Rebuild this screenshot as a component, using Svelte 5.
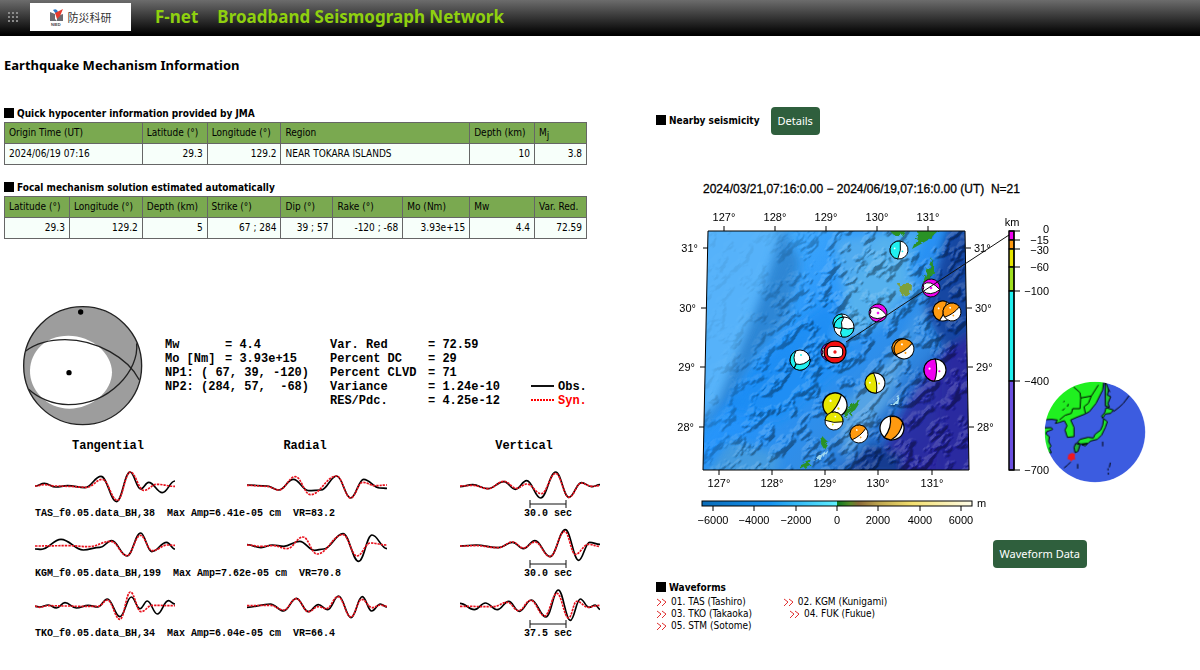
<script>
    const hypocenter = [
        { label: "Origin Time (UT)", value: "2024/06/19 07:16", width: 138, left: true },
        { label: "Latitude (°)", value: "29.3", width: 65 },
        { label: "Longitude (°)", value: "129.2", width: 74 },
        { label: "Region", value: "NEAR TOKARA ISLANDS", width: 189, left: true },
        { label: "Depth (km)", value: "10", width: 65 },
        { label: "Mj", value: "3.8", width: 52 },
    ];

    const solution = [
        { label: "Latitude (°)", value: "29.3", width: 65 },
        { label: "Longitude (°)", value: "129.2", width: 73 },
        { label: "Depth (km)", value: "5", width: 65 },
        { label: "Strike (°)", value: "67 ; 284", width: 74 },
        { label: "Dip (°)", value: "39 ; 57", width: 52 },
        { label: "Rake (°)", value: "-120 ; -68", width: 70 },
        { label: "Mo (Nm)", value: "3.93e+15", width: 67 },
        { label: "Mw", value: "4.4", width: 65 },
        { label: "Var. Red.", value: "72.59", width: 52 },
    ];

    const tables = [
        { title: "Quick hypocenter information provided by JMA", cells: hypocenter },
        { title: "Focal mechanism solution estimated automatically", cells: solution },
    ];

    const momentLines = [
        ["Mw", "= 4.4"],
        ["Mo [Nm]", "= 3.93e+15"],
        ["NP1: ( 67, 39, -120)", ""],
        ["NP2: (284, 57,  -68)", ""],
    ];

    const qualityLines = [
        ["Var. Red", "= 72.59"],
        ["Percent DC", "= 29"],
        ["Percent CLVD", "= 71"],
        ["Variance", "= 1.24e-10"],
        ["RES/Pdc.", "= 4.25e-12"],
    ];

    const components = [
        { name: "Tangential", x: 35, center: 108 },
        { name: "Radial", x: 247, center: 305 },
        { name: "Vertical", x: 460, center: 524 },
    ];

    // turning points of each trace, 3 units per pixel: [time, amplitude]
    const stations = [
        {
            y: 486,
            text: "TAS_f0.05.data_BH,38  Max Amp=6.41e-05 cm  VR=83.2",
            span: "30.0 sec",
            obs: [
                [[0,0],[28,-8],[62,3],[98,-1],[150,5],[198,-29],[245,47],[285,-42],[317,9],[341,-11],[382,20],[420,-15]],
                [[0,-3],[60,0],[95,12],[139,-20],[185,14],[222,12],[269,-30],[311,36],[350,-20],[398,6],[420,7]],
                [[0,2],[38,-4],[84,8],[132,-13],[166,10],[200,-16],[242,36],[287,-42],[327,34],[364,-10],[395,2],[420,-4]],
            ],
            syn: [
                [[0,0],[28,-4],[62,0],[98,1],[155,4],[202,-20],[247,43],[286,-42],[326,13],[366,-5],[420,1]],
                [[0,-2],[60,1],[95,12],[145,-28],[190,26],[269,-30],[311,36],[347,-11],[385,-1],[420,-3]],
                [[0,0],[38,-2],[84,8],[132,-14],[170,7],[200,-6],[244,23],[287,-38],[327,34],[364,-9],[395,1],[420,-1]],
            ],
        },
        {
            y: 546,
            text: "KGM_f0.05.data_BH,199  Max Amp=7.62e-05 cm  VR=70.8",
            span: "30.0 sec",
            obs: [
                [[0,9],[18,10],[78,-20],[145,12],[195,4],[230,-16],[276,30],[317,-39],[350,17],[395,-11],[420,9]],
                [[0,-4],[42,5],[76,-3],[110,1],[158,-14],[203,13],[230,9],[288,-37],[335,46],[375,-33],[420,8]],
                [[0,0],[48,-3],[115,5],[158,-11],[190,8],[225,-16],[270,32],[316,-49],[356,43],[389,-11],[420,-5]],
            ],
            syn: [
                [[0,0],[100,-1],[160,2],[228,-14],[276,29],[316,-32],[352,14],[398,-3],[420,-2]],
                [[0,-3],[42,1],[80,-1],[120,8],[168,-27],[210,24],[288,-34],[330,30],[370,-9],[420,-3]],
                [[0,0],[48,-1],[115,5],[158,-12],[190,6],[225,-12],[270,32],[314,-44],[346,25],[385,-5],[420,1]],
            ],
        },
        {
            y: 606,
            text: "TKO_f0.05.data_BH,34  Max Amp=6.04e-05 cm  VR=66.4",
            span: "37.5 sec",
            obs: [
                [[0,1],[14,3],[40,-3],[64,6],[90,-10],[124,6],[160,-2],[188,3],[217,-21],[255,32],[289,-27],[315,8],[337,-15],[367,24],[400,-16],[420,-6]],
                [[0,4],[70,-6],[110,15],[148,-23],[184,17],[214,-4],[242,11],[275,-30],[312,35],[346,-28],[374,15],[400,-6],[420,3]],
                [[0,-8],[43,11],[76,-9],[112,11],[146,-14],[178,16],[214,-18],[258,33],[295,-48],[331,43],[361,-21],[387,4],[406,-3],[420,10]],
            ],
            syn: [
                [[0,0],[14,4],[40,-1],[100,0],[130,1],[190,1],[217,-18],[255,40],[286,-42],[318,17],[352,-2],[420,-1]],
                [[0,-1],[70,-2],[110,12],[148,-22],[184,17],[214,2],[238,8],[273,-28],[312,33],[344,-20],[376,5],[400,-3],[420,1]],
                [[0,1],[100,2],[142,-11],[176,14],[212,-17],[254,30],[291,-38],[326,36],[350,-14],[385,4],[405,0],[420,-2]],
            ],
        },
    ];

    /**
   * @param {number[][]} points
   */
    function tracePath(points) {
        let d = `M${points[0][0]} ${points[0][1]}`;
        for (let i = 1; i < points.length; i++) {
            const [x0, y0] = points[i - 1];
            const [x1, y1] = points[i];
            const dx = (x1 - x0) * 0.4;
            d += `C${x0 + dx} ${y0} ${x1 - dx} ${y1} ${x1} ${y1}`;
        }
        return d;
    }

    const topTicks = [[724, "127°"], [775, "128°"], [826, "129°"], [877, "130°"], [928, "131°"]];
    const bottomTicks = [[719, "127°"], [772, "128°"], [825, "129°"], [878, "130°"], [932, "131°"]];
    const sideTicks = [
        { y: 248, label: "31°", left: 708, right: 966 },
        { y: 308, label: "30°", left: 706, right: 967 },
        { y: 367, label: "29°", left: 705, right: 968 },
        { y: 427, label: "28°", left: 704, right: 969 },
    ];

    // tick position, label baseline, label
    const depths = [
        [231, 233, "0"],
        [240, 244, "−15"],
        [249, 254, "−30"],
        [267, 271, "−60"],
        [291, 295, "−100"],
        [381, 385, "−400"],
        [470, 474, "−700"],
    ];
    const depthColors = [
        [231, 9, "#f000f0"],
        [240, 9, "#ff9a10"],
        [249, 18, "#e6e600"],
        [267, 24, "#a0e020"],
        [291, 90, "#20f0f0"],
        [381, 89, "#6a50e0"],
    ];
    const elevations = [[713, "−6000"], [754, "−4000"], [796, "−2000"], [837, "0"], [878, "2000"], [920, "4000"], [961, "6000"]];

    const balls = [
        { x: 899, y: 250, r: 9, color: "#20f0f0", kind: "half", turn: 8 },
        { x: 878, y: 313, r: 9, color: "#f000f0", kind: "lens", turn: 10 },
        { x: 931, y: 288, r: 9, color: "#f000f0", kind: "lens", turn: 5 },
        { x: 943, y: 311, r: 10, color: "#ff9a10", kind: "half", turn: 20 },
        { x: 952, y: 312, r: 9, color: "#ff9a10", kind: "half", turn: 55 },
        { x: 842, y: 323, r: 9, color: "#20f0f0", kind: "half", turn: 0 },
        { x: 844, y: 327, r: 10, color: "#20f0f0", kind: "quad", turn: 0 },
        { x: 901, y: 348, r: 9, color: "#ff9a10", kind: "half", turn: 30 },
        { x: 904, y: 349, r: 10, color: "#ff9a10", kind: "half", turn: 55 },
        { x: 800, y: 360, r: 10, color: "#20f0f0", kind: "bowl", turn: 0 },
        { x: 830, y: 352, r: 9, color: "#c020f0", kind: "lens", turn: 0 },
        { x: 835, y: 352, r: 11, color: "#f01010", kind: "core", turn: 0 },
        { x: 935, y: 370, r: 11, color: "#f000f0", kind: "half", turn: 2 },
        { x: 875, y: 383, r: 10, color: "#e6e600", kind: "half", turn: -8 },
        { x: 835, y: 405, r: 12, color: "#e6e600", kind: "half", turn: 32 },
        { x: 834, y: 421, r: 9, color: "#e6e600", kind: "half", turn: 95 },
        { x: 859, y: 434, r: 9, color: "#ff9a10", kind: "half", turn: 50 },
        { x: 892, y: 428, r: 12, color: "#ff9a10", kind: "band", turn: 10 },
    ];

    const waveforms = [
        ["01. TAS (Tashiro)", "02. KGM (Kunigami)"],
        ["03. TKO (Takaoka)", "04. FUK (Fukue)"],
        ["05. STM (Sotome)"],
    ];
</script>

<header>
    <svg class="grip" viewBox="0 0 12 12" aria-hidden="true">
        {#each [1, 5, 9] as gy}
            {#each [1, 5, 9] as gx}
                <rect x={gx} y={gy} width="2" height="2" fill="#8a8a8a" />
            {/each}
        {/each}
    </svg>
    <a class="logo" href="#nied">
        <svg viewBox="0 0 14 17" aria-hidden="true">
            <path d="M0 3 5 5 5 12 0 12Z M7 7 13 5 13 12 7 12Z M2 7 7 12 3 12Z" fill="#6b6b70" />
            <path d="M3 1Q7-1 8 3L6 5Z" fill="#2a78c8" />
            <path d="M5 4 13 0 10 7 7 10Z" fill="#e63b2e" />
            <text x="1" y="17">NIED</text>
        </svg>
        <span>防災科研</span>
    </a>
    <h1><span>F-net</span> <span>Broadband Seismograph Network</span></h1>
</header>

<main>
    <section class="left">
        <h2>Earthquake Mechanism Information</h2>

        {#each tables as table}
            <table>
                <caption><i class="mark"></i>{table.title}</caption>
                <colgroup>
                    {#each table.cells as cell}
                        <col style="width: {cell.width / 583 * 100}%">
                    {/each}
                </colgroup>
                <thead>
                    <tr>
                        {#each table.cells as cell}
                            <th>
                                {#if cell.label === "Mj"}M<sub>j</sub>{:else}{cell.label}{/if}
                            </th>
                        {/each}
                    </tr>
                </thead>
                <tbody>
                    <tr>
                        {#each table.cells as cell}
                            <td class:text={cell.left}>{cell.value}</td>
                        {/each}
                    </tr>
                </tbody>
            </table>
        {/each}

        <svg class="mechanism" viewBox="4 300 600 345" role="img" aria-label="Moment tensor solution">
            <!-- beach ball, drawn at 3x -->
            <g transform="translate(0 290) scale(0.3333)" fill="none" stroke="#222" stroke-width="4">
                <circle cx="248" cy="227" r="177" fill="#9d9d9d" />
                <path d="M90 240C92 185 135 137 205 137C275 137 336 190 336 247C336 305 275 356 208 356C140 356 88 300 90 240Z" fill="#fff" stroke="none" />
                <path d="M76 184C110 158 150 149 195 149C290 149 385 205 418 270" />
                <path d="M410 160C418 240 330 344 205 344C155 344 112 322 86 298" />
                <circle cx="242" cy="66" r="8" fill="#000" stroke="none" />
                <circle cx="207" cy="248" r="8" fill="#000" stroke="none" />
            </g>

            <g class="params">
                {#each momentLines as line, i}
                    <text x="165" y={348 + i * 14}>{line[0]}</text>
                    <text x="225" y={348 + i * 14}>{line[1]}</text>
                {/each}
                {#each qualityLines as line, i}
                    <text x="330" y={348 + i * 14}>{line[0]}</text>
                    <text x="428" y={348 + i * 14}>{line[1]}</text>
                {/each}
                <path d="M531 386H554" stroke="#111" stroke-width="2" />
                <text x="558" y="390">Obs.</text>
                <path d="M531 400H554" stroke="#f00" stroke-width="2" stroke-dasharray="2 1" />
                <text x="558" y="404" fill="#f00">Syn.</text>
                {#each components as component}
                    <text x={component.center} y="449" text-anchor="middle">{component.name}</text>
                {/each}
            </g>

            {#each stations as station}
                {#each components as component, c}
                    <g transform="translate({component.x} {station.y}) scale(0.3333)" fill="none">
                        <path d={tracePath(station.obs[c])} stroke="#000" stroke-width="5" />
                        <path d={tracePath(station.syn[c])} stroke="#e8101c" stroke-width="5" stroke-dasharray="7 3" />
                    </g>
                {/each}
                <g class="station">
                    <text x="35" y={station.y + 30}>{station.text}</text>
                    <path d="M530 {station.y + 18}H566M530 {station.y + 14}v8M566 {station.y + 14}v8" stroke="#111" />
                    <text x="548" y={station.y + 30} text-anchor="middle">{station.span}</text>
                </g>
            {/each}
        </svg>
    </section>

    <section class="right">
        <div class="nearby">
            <h3><i class="mark"></i>Nearby seismicity</h3>
            <button type="button">Details</button>
        </div>

        <svg class="map" viewBox="656 180 504 350" role="img" aria-label="Nearby seismicity map">
            <defs>
                <clipPath id="frame"><path d="M708 231H965L969 470H703Z" /></clipPath>
                <clipPath id="globe"><circle cx="735" cy="276" r="151" /></clipPath>
                <linearGradient id="sea" gradientUnits="userSpaceOnUse" x1="730" y1="250" x2="960" y2="460">
                    <stop offset="0" stop-color="#46aefc" />
                    <stop offset="0.4" stop-color="#1e90fa" />
                    <stop offset="0.65" stop-color="#2a88e4" />
                    <stop offset="0.85" stop-color="#1450b4" />
                    <stop offset="1" stop-color="#281e96" />
                </linearGradient>
                <linearGradient id="elevation">
                    <stop offset="0" stop-color="#0a6cb8" />
                    <stop offset="0.25" stop-color="#1592f0" />
                    <stop offset="0.5" stop-color="#5ff0ff" />
                    <stop offset="0.5" stop-color="#0a7a20" />
                    <stop offset="0.55" stop-color="#5a8a28" />
                    <stop offset="0.58" stop-color="#8a6a38" />
                    <stop offset="0.66" stop-color="#c0a850" />
                    <stop offset="0.78" stop-color="#f4e070" />
                    <stop offset="1" stop-color="#fffce8" />
                </linearGradient>
                <filter id="relief" x="0" y="0" width="1" height="1" color-interpolation-filters="sRGB">
                    <feTurbulence type="fractalNoise" baseFrequency="0.05 0.08" numOctaves="4" seed="23" />
                    <feColorMatrix values="0 0 0 0 0  0 0 0 0 0  0 0 0 0 0  2.4 0 0 0 -1.2" />
                    <feDiffuseLighting surfaceScale="6" diffuseConstant="0.76" lighting-color="#fff">
                        <feDistantLight azimuth="270" elevation="46" />
                    </feDiffuseLighting>
                </filter>
                <filter id="soft"><feGaussianBlur stdDeviation="5" /></filter>
                <filter id="rough" x="-0.2" y="-0.2" width="1.4" height="1.4">
                    <feTurbulence type="fractalNoise" baseFrequency="0.2" numOctaves="2" seed="4" />
                    <feDisplacementMap in="SourceGraphic" scale="6" />
                </filter>
                <linearGradient id="fade" gradientUnits="userSpaceOnUse" x1="735" y1="320" x2="800" y2="350">
                    <stop offset="0" stop-color="#222" />
                    <stop offset="1" stop-color="#fff" />
                </linearGradient>
                <mask id="rugged" maskUnits="userSpaceOnUse" x="700" y="230" width="270" height="242">
                    <rect x="700" y="230" width="270" height="242" fill="url(#fade)" />
                </mask>
            </defs>

            <text class="title" x="703" y="193">2024/03/21,07:16:0.00 − 2024/06/19,07:16:0.00 (UT)  N=21</text>

            <g clip-path="url(#frame)">
                <rect x="700" y="230" width="270" height="242" fill="url(#sea)" />
                <g filter="url(#soft)">
                    <path d="M700 225H782L765 280L742 345L718 400L700 420Z" fill="#55b2fa" />
                    <path d="M782 225L768 275L755 310L738 352L716 405L700 420V432L728 400L760 350L788 318L800 262Z" fill="#2a7cc8" opacity="0.75" />
                    <path d="M790 330L830 300L850 360L780 420L720 410Z" fill="#128af4" />
                    <path d="M835 240L890 232L920 290L850 340Z" fill="#48a8f0" />
                    <path d="M880 232L925 228L890 320L830 345L850 290Z" fill="#52b0ec" opacity="0.7" />
                    <path d="M948 228H975V480H935L945 350L925 310Z" fill="#0b3f9f" />
                    <path d="M840 410L900 350L925 300L890 400L845 460Z" fill="#58a6e4" opacity="0.8" />
                    <path d="M915 390L945 350L975 330V480H895L885 445Z" fill="#251d9c" opacity="0.85" />
                    <path d="M845 475L870 445L900 455L900 475Z" fill="#0d348c" />
                    <path d="M703 475L730 440L780 455L775 475Z" fill="#3d98e0" />
                </g>
                <g class="shade" mask="url(#rugged)">
                    <rect x="640" y="160" width="390" height="390" transform="rotate(-45 835 350)" filter="url(#relief)" />
                </g>
                <g filter="url(#rough)">
                    <path d="M888 229H910L905 234L895 236Z M918 229H940L928 240L912 249L916 240Z" fill="#2c9228" />
                    <path d="M932 258L934 272L928 284L923 282Z" fill="#2c9228" />
                    <path d="M898 284H911L910 294L902 296Z" fill="#7da03c" />
                    <path d="M862 399L856 401L845 410L844 418L855 410Z M822 436L828 442L824 449L821 444Z M799 466L812 460L810 465L800 470Z" fill="#2c9228" />
                    <path d="M814 462L822 454L828 449L822 459Z M890 405L900 395L898 405Z" fill="#9fd8f0" />
                </g>
            </g>
            <path d="M708 231H965L969 470H703Z" fill="none" stroke="#000" />

            {#each balls as ball}
                <g transform="translate({ball.x} {ball.y}) scale({ball.r / 10}) rotate({ball.turn})" stroke="#000">
                    {#if ball.kind === "lens"}
                        <circle r="10" fill={ball.color} />
                        <path d="M-9-3Q-2-10 10 1Q0 10-9 4Q-7 0-9-3Z" fill="#fff" />
                        <circle r="1" fill={ball.color} stroke={ball.color} />
                    {:else if ball.kind === "core"}
                        <circle r="10" fill={ball.color} />
                        <rect x="-7" y="-5" width="14" height="10" rx="4" fill="#fff" />
                        <circle r="1" fill={ball.color} stroke={ball.color} />
                    {:else if ball.kind === "quad"}
                        <circle r="10" fill="#fff" />
                        <path d="M0-10A10 10 0 0 0-10 0Q-5 2-2 1Q-4-5 0-10Z M10 1A10 10 0 0 1-2 10Q-5 6-2 1Q4 3 10 1Z" fill={ball.color} />
                    {:else if ball.kind === "bowl"}
                        <circle r="10" fill="#fff" />
                        <path d="M-4-9A10 10 0 0 0-6 8Q-4 6-4 4Q-8-2-4-9Z M10-1A10 10 0 0 1-6 8L-4 4Q4 6 10-1Z" fill={ball.color} />
                        <circle cx="1" cy="-5" r="1" fill={ball.color} stroke="none" />
                    {:else if ball.kind === "band"}
                        <circle r="10" fill="#fff" />
                        <path d="M-3-9A10 10 0 0 1 8-6Q8 4 1 10Q-3 10-5 9Q0 0-3-9Z" fill={ball.color} />
                    {:else}
                        <circle r="10" fill="#fff" />
                        <path d="M0-10A10 10 0 0 0 0 10Q3 0 0-10Z" fill={ball.color} />
                        <circle cx="4" cy="1" r="1" fill={ball.color} stroke="none" />
                        <circle cx="-5" cy="-1" r="1" fill="#fff" stroke="none" />
                    {/if}
                </g>
            {/each}
            <path d="M846 342L1009 235" stroke="#111" />

            <g class="axis">
                {#each topTicks as tick}
                    <path d="M{tick[0]} 231v-5" />
                    <text x={tick[0]} y="221" text-anchor="middle">{tick[1]}</text>
                {/each}
                {#each bottomTicks as tick}
                    <path d="M{tick[0]} 470v5" />
                    <text x={tick[0]} y="487" text-anchor="middle">{tick[1]}</text>
                {/each}
                {#each sideTicks as tick}
                    <path d="M{tick.left} {tick.y}h-5M{tick.right} {tick.y}h5" />
                    <text x={tick.left - 10} y={tick.y + 4} text-anchor="end">{tick.label}</text>
                    <text x={tick.right + 8} y={tick.y + 4}>{tick.label}</text>
                {/each}

                {#each depthColors as band}
                    <rect x="1009" y={band[0]} width="5" height={band[1]} fill={band[2]} />
                {/each}
                <rect x="1009" y="231" width="5" height="239" fill="none" />
                <path d="M1014 231V470" />
                {#each depths as depth}
                    <path d="M1009 {depth[0]}h11" />
                    <text x="1049" y={depth[1]} text-anchor="end">{depth[2]}</text>
                {/each}
                <text x="1012" y="226" text-anchor="middle">km</text>

                <rect x="702" y="501" width="270" height="5" fill="url(#elevation)" />
                {#each elevations as tick}
                    <path d="M{tick[0]} 506v5" />
                    <text x={tick[0]} y="524" text-anchor="middle">{tick[1]}</text>
                {/each}
                <text x="977" y="507">m</text>
            </g>

            <!-- locator globe, drawn at 3x -->
            <g transform="translate(850 340) scale(0.3333)" clip-path="url(#globe)" stroke="#000" stroke-width="3" stroke-linejoin="round">
                <circle cx="735" cy="276" r="152" fill="#3c5ce0" stroke="none" />
                <path d="M570 240L605 238L622 240L616 250L628 247L643 242L651 257L645 270L652 292L672 290L672 262L662 240L680 232L705 222L718 215L738 190L758 150L762 120H570Z" fill="#20f020" />
                <path d="M570 264L604 263L608 268L590 275L588 282L598 290L596 305L603 318L598 325L604 338L570 340Z" fill="#20e830" />
                <path d="M765 120L776 150L772 165L782 170L774 190L778 202L766 198Z" fill="#20c040" />
                <path d="M768 203L790 210L782 220L766 222L758 235L755 228L764 218Z" fill="#20e830" />
                <path d="M761 236L772 245L766 262L755 285L742 298L722 303L714 310L692 312L682 308L690 298L714 292L730 294L735 283L752 270L758 256Z" fill="#20e830" />
                <path d="M677 310L690 314L684 334L675 338L672 322Z M695 314L712 311L706 318Z" fill="#20b040" />
                <path d="M670 140L690 158L692 174L724 168L745 135M692 174L690 206L668 206L664 220L645 226L628 240M724 168L715 190L702 200L706 220M637 212L644 205M652 200l3-8M640 186l4-3M790 215L806 203L820 190L838 166M774 146l6 10M662 366L652 376L642 384M683 372v14M758 305v14M781 368l-3 14M774 385v6M775 398v6" fill="none" />
                <path d="M655 344l7-4 5-1 8 3-1 9 2 7-8 1-4 5-5-5-7-2 2-6Z" fill="#f01820" stroke="none" />
            </g>
        </svg>

        <div class="actions">
            <button type="button">Waveform Data</button>
        </div>

        <h3><i class="mark"></i>Waveforms</h3>
        <ul>
            {#each waveforms as row}
                <li>
                    {#each row as name}
                        <a href="#{name.slice(4, 7)}">
                            <svg viewBox="0 0 11 9" aria-hidden="true"><path d="M1 1 5 4 1 8M6 1 10 4 6 8" /></svg>
                            {name}
                        </a>
                    {/each}
                </li>
            {/each}
        </ul>
    </section>
</main>

<style>
    :global(body) {
        margin: 0;
        background: #fff;
        color: #000;
        font: 10px/12px Tahoma, "DejaVu Sans Condensed", "DejaVu Sans", sans-serif;
    }

    header {
        display: flex;
        align-items: center;
        height: 36px;
        padding-left: 7px;
        padding-bottom: 2px;
        box-sizing: border-box;
        background: linear-gradient(#6c6c6c, #000 96%);
    }

    .grip {
        width: 12px;
        height: 12px;
    }

    .logo {
        display: flex;
        align-items: center;
        justify-content: center;
        gap: 4px;
        width: 101px;
        height: 28px;
        margin: 0 24px 0 11px;
        background: #fff;
        color: #333;
        font: 11px/14px "Noto Sans CJK JP", sans-serif;
        text-decoration: none;
    }

    .logo svg {
        width: 14px;
        height: 17px;
    }

    .logo text {
        font: bold 4px "Liberation Sans", sans-serif;
        fill: #444;
    }

    h1 {
        display: flex;
        gap: 19px;
        margin: 0;
        color: #8fd00f;
        font: bold 17px/20px "Noto Sans", sans-serif;
    }

    h2 {
        margin: 0 0 32px;
        font: bold 13px/18px "Noto Sans", sans-serif;
    }

    h3 {
        margin: 0;
        font-size: 10px;
        line-height: 14px;
    }

    main {
        display: grid;
        grid-template-columns: minmax(0, 652fr) minmax(0, 548fr);
    }

    .left {
        padding: 20px 48px 0 4px;
    }

    .right {
        padding: 71px 40px 0 4px;
    }

    .mark {
        display: inline-block;
        width: 10px;
        height: 10px;
        margin-right: 3px;
        vertical-align: -1px;
        background: #000;
    }

    table {
        width: calc(100% - 17px);
        margin-bottom: 15px;
        border-collapse: collapse;
        table-layout: fixed;
    }

    caption {
        height: 16px;
        font-weight: bold;
        line-height: 16px;
        text-align: left;
        white-space: nowrap;
    }

    th, td {
        height: 20px;
        padding: 0 4px;
        border: 1px solid #666;
        white-space: nowrap;
    }

    th {
        background: #7aa950;
        font-weight: normal;
        text-align: left;
    }

    td {
        background: #f7fffa;
        text-align: right;
    }

    td.text {
        text-align: left;
    }

    sub {
        font-size: 10px;
        line-height: 0;
    }

    .mechanism, .map {
        display: block;
        width: 100%;
        height: auto;
    }

    .mechanism {
        margin-top: 61px;
    }

    svg text {
        white-space: pre;
    }

    .params text, .station text {
        font-family: "Courier New", "Liberation Mono", monospace;
        font-weight: bold;
    }

    .params text {
        font-size: 12px;
    }

    .station text {
        font-size: 10px;
    }

    .title {
        font: 12px "Liberation Sans", Arial, sans-serif;
        stroke: #000;
        stroke-width: 0.3px;
    }

    .axis {
        font: 11px "Liberation Sans", Arial, sans-serif;
    }

    .axis path, .axis rect {
        stroke: #000;
    }

    .shade {
        mix-blend-mode: hard-light;
        opacity: 0.36;
    }

    .nearby {
        display: flex;
        align-items: center;
        gap: 11px;
        margin-bottom: 45px;
    }

    button {
        height: 28px;
        padding: 0 7px;
        border: none;
        border-radius: 4px;
        background: #2f5f3d;
        color: #fff;
        font: 11px/16px "Noto Sans", sans-serif;
        cursor: pointer;
    }

    .actions {
        display: flex;
        justify-content: flex-end;
        margin: 10px 73px 13px 0;
    }

    ul {
        margin: 1px 0 0;
        padding: 0;
        list-style: none;
    }

    li {
        display: flex;
        gap: 37px;
    }

    li a {
        display: flex;
        align-items: center;
        gap: 4px;
        color: #000;
        text-decoration: none;
    }

    li svg {
        width: 11px;
        height: 9px;
        fill: none;
        stroke: #e03030;
    }
</style>
